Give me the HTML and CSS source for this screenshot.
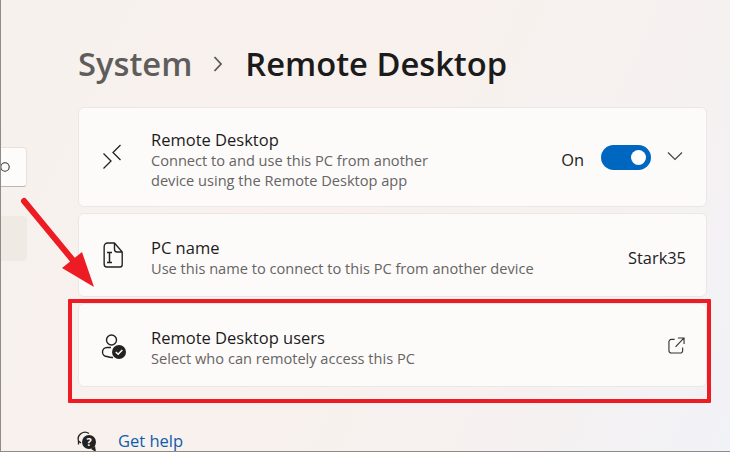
FILE: index.html

```html
<!DOCTYPE html>
<html lang="en">
<head>
  <meta charset="UTF-8" />
  <title>System - Remote Desktop</title>
  <link rel="stylesheet" href="styles.css">
</head>
<body>
  <div class="window">
    <div class="sidebar">
      <div class="search">
        <svg class="search-icon" width="12" height="14" viewBox="0 0 12 14"><circle cx="5" cy="7" r="4.2" fill="none" stroke="#333" stroke-width="1.1"/></svg>
      </div>
      <div class="nav-selected"></div>
    </div>

    <div class="main">
      <div class="title">
        <span class="crumb">System</span>
        <svg class="crumb-sep" width="12" height="16" viewBox="0 0 12 16"><path d="M2.500 1 9 8l-6.500 7" fill="none" stroke="#5c5a58" stroke-width="1.800"/></svg>
        <span class="page">Remote Desktop</span>
      </div>

      <div class="card card-tall">
        <svg class="card-icon" width="24" height="26" viewBox="0 0 24 26"><path d="M1.500 9.500 9 17 1.500 24.500M18.500 1 11 8.500 18.500 16" fill="none" stroke="#222" stroke-width="1.300"/></svg>
        <div class="card-text">
          <div class="card-name">Remote Desktop</div>
          <div class="card-desc">Connect to and use this PC from another<br>device using the Remote Desktop app</div>
        </div>
        <div class="card-right">
          <span class="value">On</span>
          <span class="toggle"><span class="knob"></span></span>
          <svg class="chevron" width="16" height="10" viewBox="0 0 16 10"><path d="M1 1.500 8 8.500l7-7" fill="none" stroke="#444" stroke-width="1.200"/></svg>
        </div>
      </div>

      <div class="card card-name-row">
        <svg class="card-icon" width="24" height="26" viewBox="0 0 24 26"><path d="M6 1h8l9 9v12.500a2.500 2.500 0 0 1-2.500 2.500H5a3 3 0 0 1-3-3V5a4 4 0 0 1 4-4zM14 1v6a3 3 0 0 0 3 3h6" transform="scale(.86 1) translate(.5 0)" fill="none" stroke="#222" stroke-width="1.600"/><path d="M5 10.500h5M7.500 10.500v10M5 20.500h5" fill="none" stroke="#222" stroke-width="1.500"/></svg>
        <div class="card-text">
          <div class="card-name">PC name</div>
          <div class="card-desc">Use this name to connect to this PC from another device</div>
        </div>
        <div class="card-right">
          <span class="value">Stark35</span>
        </div>
      </div>

      <div class="card card-users">
        <svg class="card-icon users-icon" width="26" height="26" viewBox="0 0 26 26"><circle cx="10.500" cy="6" r="5" fill="none" stroke="#222" stroke-width="1.400"/><path d="M10 13.500H6a4.500 4.500 0 0 0 0 9 14 14 0 0 0 6 1" fill="none" stroke="#222" stroke-width="1.400"/><circle cx="18" cy="18" r="7" fill="#222"/><path d="m14.800 18 2.300 2.300 4.200-4.400" fill="none" stroke="#fff" stroke-width="1.500"/></svg>
        <div class="card-text">
          <div class="card-name">Remote Desktop users</div>
          <div class="card-desc">Select who can remotely access this PC</div>
        </div>
        <div class="card-right">
          <svg class="open-icon" width="17" height="17" viewBox="0 0 18 18"><path d="M7 2.500H3.500a2.500 2.500 0 0 0-2.500 2.500v9.500A2.500 2.500 0 0 0 3.500 17H13a2.500 2.500 0 0 0 2.500-2.500V11M8 10.500 16.500 1.500M10.500 1h6.500v6.500" fill="none" stroke="#333" stroke-width="1.200"/></svg>
        </div>
      </div>

      <div class="help">
        <svg class="help-icon" width="22" height="22" viewBox="0 0 22 22"><path d="M1.500 11A6.800 6.800 0 0 1 12 3.500" fill="none" stroke="#222" stroke-width="1.300"/><path d="M1.500 11v3.500M1.500 11l2.500 2" fill="none" stroke="#222" stroke-width="1.300"/><circle cx="12" cy="12" r="7" fill="#222"/><path d="M14 19l5 3-1-6z" fill="#222"/><text class="help-mark" x="12" y="15.500" text-anchor="middle">?</text></svg>
        <a class="help-link">Get help</a>
      </div>
    </div>
  </div>

  <!-- annotation drawn on top of the screenshot -->
  <div class="red-box"></div>
  <svg class="arrow" width="90" height="110" viewBox="0 0 90 110"><path d="M4 5 56 68" fill="none" stroke="#ed1c24" stroke-width="6" stroke-linecap="round"/><path d="M42 72 62 56 74 91z" fill="#ed1c24"/></svg>

  <div class="edge-left"></div>
  <div class="edge-bottom"></div>
</body>
</html>
```

FILE: styles.css

```css
html, body {
  margin: 0;
  height: 100%;
  overflow: hidden;
}

body {
  font-family: 'Open Sans', 'Noto Sans', sans-serif;
  background: linear-gradient(115deg, #f7f1ed 0%, #f8f1ed 45%, #f6f1f0 75%, #f1f2f7 100%);
  color: #1c1c1c;
}

.window {
  display: flex;
  height: 452px;
}

.sidebar {
  width: 78px;
  flex-shrink: 0;
  padding-top: 147px;
  box-sizing: border-box;
}

.search {
  width: 27px;
  height: 40px;
  box-sizing: border-box;
  background: #fdfcfb;
  border: 1px solid #e6e2df;
  border-left: none;
  border-bottom-color: #b9b6b4;
  border-radius: 0 4px 4px 0;
  display: flex;
  align-items: center;
  overflow: hidden;
}

.search-icon {
  flex-shrink: 0;
}

.nav-selected {
  width: 27px;
  height: 45px;
  margin-top: 29px;
  background: #efeae4;
  border-radius: 0 4px 4px 0;
}

.main {
  width: 629px;
  flex-shrink: 0;
}

.title {
  display: flex;
  align-items: center;
  height: 107px;
  padding-top: 20px;
  box-sizing: border-box;
  font-size: 32.700px;
  font-weight: 600;
  white-space: nowrap;
}

.crumb {
  color: #5f5d5b;
}

.crumb-sep {
  margin: 0 21px 0 20px;
}

.page {
  color: #1b1b1b;
}

.card {
  display: flex;
  align-items: center;
  box-sizing: border-box;
  background: #fdfbfa;
  border: 1px solid #ebe7e4;
  border-radius: 6px;
  padding: 0 20px 0 23px;
}

.card-tall {
  height: 100px;
}

.card-name-row {
  height: 84px;
  margin-top: 6px;
}

.card-users {
  height: 84px;
  margin-top: 6px;
}

.card-icon {
  flex-shrink: 0;
  margin-right: 25px;
}

.users-icon {
  margin: 3px 24px 0 -1px;
}

.card-text {
  flex: 1;
  padding-top: 5px;
}

.card-name {
  font-size: 16.500px;
  line-height: 21px;
  color: #1c1c1c;
}

.card-desc {
  font-size: 14.600px;
  line-height: 20px;
  color: #656463;
}

.card-right {
  display: flex;
  align-items: center;
}

.value {
  font-size: 16.400px;
  color: #222;
  padding-top: 4px;
}

.toggle {
  width: 50px;
  height: 25px;
  margin-left: 17px;
  box-sizing: border-box;
  padding: 5px 5px 5px 30px;
  border-radius: 13px;
  background: #0067c0;
}

.knob {
  display: block;
  width: 15px;
  height: 15px;
  border-radius: 50%;
  background: #fff;
}

.chevron {
  margin: 0 3px 2px 16px;
}

.open-icon {
  display: block;
  margin-right: 1px;
}

.help {
  display: flex;
  align-items: center;
  margin-top: 43px;
  margin-left: -1px;
}

.help-icon {
  flex-shrink: 0;
}

.help-mark {
  font-size: 11px;
  font-weight: 700;
  fill: #fff;
}

.help-link {
  margin-left: 19px;
  font-size: 16.500px;
  line-height: 20px;
  color: #0f5cad;
}

.red-box {
  position: absolute;
  left: 68px;
  top: 299px;
  width: 643px;
  height: 104px;
  box-sizing: border-box;
  border: 4px solid #ed1c24;
  border-radius: 1px;
}

.arrow {
  position: absolute;
  left: 20px;
  top: 196px;
}

.edge-left {
  position: absolute;
  left: 0;
  top: 0;
  width: 1px;
  height: 100%;
  background: #8d8c8b;
}

.edge-bottom {
  position: absolute;
  left: 0;
  bottom: 0;
  width: 100%;
  height: 1px;
  background: #8d8c8b;
}
```
